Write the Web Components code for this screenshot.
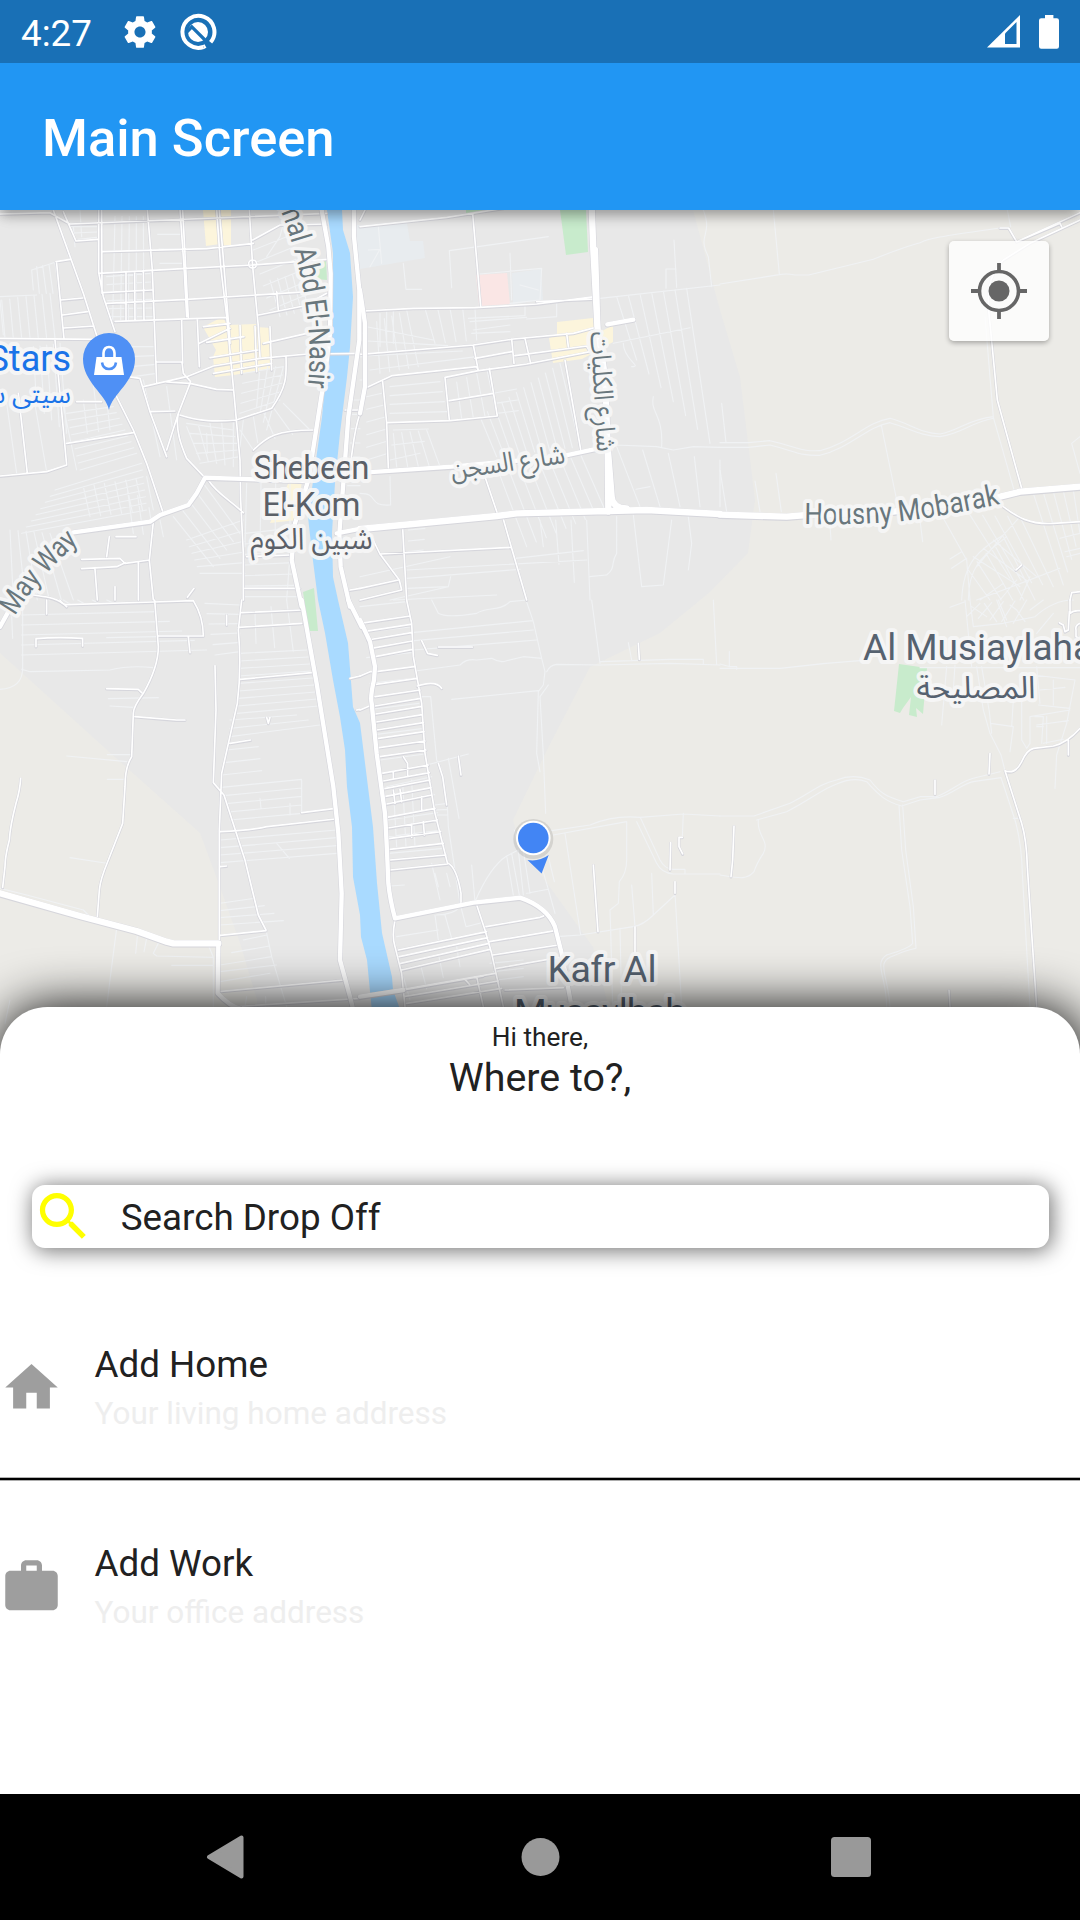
<!DOCTYPE html>
<html lang="en">
<head>
<meta charset="utf-8">
<title>Main Screen</title>
<style>
html,body{margin:0;padding:0;background:#fff}
body{width:1080px;height:1920px;overflow:hidden;font-family:Roboto,"Noto Sans",sans-serif}
</style>
</head>
<body>
<phone-screen>
  <status-bar slot="status" time="4:27"></status-bar>
  <app-bar slot="bar">Main Screen</app-bar>
  <map-view slot="map"></map-view>
  <ride-sheet slot="sheet">
    <span slot="greeting">Hi there,</span>
    <span slot="question">Where to?,</span>
    <search-box slot="search">Search Drop Off</search-box>
    <place-row icon="home"><span slot="title">Add Home</span><span slot="hint">Your living home address</span></place-row>
    <thin-divider></thin-divider>
    <place-row icon="work"><span slot="title">Add Work</span><span slot="hint">Your office address</span></place-row>
  </ride-sheet>
  <nav-bar slot="nav"></nav-bar>
</phone-screen>
<script>
const define = (name, html, setup) => {
  customElements.define(name, class extends HTMLElement {
    connectedCallback() {
      if (this.shadowRoot) return;
      const t = document.createElement('template');
      t.innerHTML = html;
      this.attachShadow({mode: 'open'}).appendChild(t.content.cloneNode(true));
      if (setup) setup(this, this.shadowRoot);
    }
  });
};

define('phone-screen', `
<style>
:host{display:flex;flex-direction:column;position:relative;width:1080px;height:1920px;overflow:hidden;background:#fff}
.body{flex:1;min-height:0;position:relative;overflow:hidden;display:flex;flex-direction:column}
.sheet{position:absolute;left:0;right:0;bottom:0}
.top{position:relative;z-index:1}
</style>
<div class="top"><slot name="status"></slot><slot name="bar"></slot></div>
<div class="body"><slot name="map"></slot><div class="sheet"><slot name="sheet"></slot></div></div>
<slot name="nav"></slot>`);

define('status-bar', `
<style>
:host{display:flex;position:relative;z-index:1;align-items:center;justify-content:space-between;box-sizing:border-box;height:63px;padding:0 21px;background:#1970b6;color:#fff;font-size:36.75px}
div{display:flex;align-items:center}
svg{display:block}
.time{letter-spacing:0;line-height:43px;padding-top:3px}
</style>
<div>
  <span class="time"></span>
  <svg width="38" height="38" viewBox="0 0 24 24" style="margin-left:29px" fill="#fff"><path d="M19.43 12.98c.04-.32.07-.64.07-.98s-.03-.66-.07-.98l2.11-1.65c.19-.15.24-.42.12-.64l-2-3.46c-.12-.22-.39-.3-.61-.22l-2.49 1c-.52-.4-1.08-.73-1.69-.98l-.38-2.65C14.46 2.18 14.25 2 14 2h-4c-.25 0-.46.18-.49.42l-.38 2.65c-.61.25-1.17.59-1.69.98l-2.49-1c-.23-.09-.49 0-.61.22l-2 3.46c-.13.22-.07.49.12.64l2.11 1.65c-.04.32-.07.65-.07.98s.03.66.07.98l-2.11 1.65c-.19.15-.24.42-.12.64l2 3.46c.12.22.39.3.61.22l2.49-1c.52.4 1.08.73 1.69.98l.38 2.65c.03.24.24.42.49.42h4c.25 0 .46-.18.49-.42l.38-2.65c.61-.25 1.17-.59 1.69-.98l2.49 1c.23.09.49 0 .61-.22l2-3.46c.12-.22.07-.49-.12-.64l-2.11-1.65zM12 15.5c-1.93 0-3.5-1.57-3.5-3.5s1.57-3.5 3.5-3.5 3.5 1.57 3.5 3.5-1.57 3.5-3.5 3.5z"/></svg>
  <svg width="38" height="38" viewBox="0 0 38 38" style="margin-left:20px" fill="none"><path d="M31.600 29.200A16 16 0 1 0 24.500 34" stroke="#fff" stroke-width="4"/><path d="M24.500 34A16 16 0 0 0 26.500 33.100" stroke="#fff" stroke-width="4"/><circle cx="19" cy="19" r="10" fill="#fff"/><path d="M8 19 12.800 13.800 29 30" stroke="#1970b6" stroke-width="3.200"/></svg>
</div>
<div>
  <svg width="33" height="33" viewBox="0 0 33 33" style="margin-right:19px" fill="none"><path d="M0 32.5 33 0V32.5Z" fill="#fff"/><path d="M18 18.5 29.5 7V29H18Z" fill="#1970b6"/></svg>
  <svg width="20" height="34" viewBox="0 0 20 34" fill="#fff"><path d="M6 0h8.4v3.2h3.4q2.2 0 2.2 2.2v26q0 2.4-2.2 2.4H2.2Q0 33.800 0 31.400V5.400Q0 3.200 2.200 3.200H6Z"/></svg>
</div>`, (host, root) => {
  root.querySelector('.time').textContent = host.getAttribute('time');
});

define('app-bar', `
<style>
:host{display:flex;align-items:center;box-sizing:border-box;height:147px;padding:2px 42px 0;background:#2196f3;color:#fff;font-size:52.5px;font-weight:500;box-shadow:0 5px 11px rgba(0,0,0,.26),0 9px 14px -3px rgba(0,0,0,.12)}
</style><slot></slot>`);

define('search-box', `
<style>
:host{display:flex;align-items:center;gap:26.25px;height:63px;border-radius:13px;background:#fff;box-shadow:1.84px 1.84px 21px 1.3px rgba(0,0,0,.54);font-size:36.75px}
svg{display:block;flex:none}
span{padding-top:2px}
</style>
<svg width="63" height="63" viewBox="0 0 24 24" fill="#ff0"><path d="M15.500 14h-.79l-.28-.27C15.410 12.590 16 11.110 16 9.500 16 5.910 13.090 3 9.500 3S3 5.910 3 9.500 5.910 16 9.500 16c1.610 0 3.090-.59 4.230-1.570l.27.28v.79l5 4.990L20.490 19l-4.990-5zm-6 0C7.010 14 5 11.990 5 9.500S7.010 5 9.500 5 14 7.010 14 9.500 11.990 14 9.500 14z"/></svg>
<span><slot></slot></span>`);

const rowIcons = {
  home: 'M10 20v-6h4v6h5v-8h3L12 3 2 12h3v8z',
  work: 'M20 6h-4V4c0-1.110-.89-2-2-2h-4c-1.110 0-2 .89-2 2v2H4c-1.110 0-1.990.89-1.990 2L2 19c0 1.110.89 2 2 2h16c1.110 0 2-.89 2-2V8c0-1.110-.89-2-2-2zm-6 0h-4V4h4v2z'
};
define('place-row', `
<style>
:host{display:flex;align-items:center;gap:31.5px;height:91px}
svg{display:block;flex:none}
div{display:flex;flex-direction:column;gap:8.5px}
.t{font-size:36.75px;line-height:43px;color:#212121}
.h{font-size:31.5px;line-height:37px;color:#eee}
</style>
<svg width="63" height="63" viewBox="0 0 24 24" fill="#9e9e9e"><path/></svg>
<div><span class="t"><slot name="title"></slot></span><span class="h"><slot name="hint"></slot></span></div>`,
(host, root) => root.querySelector('path').setAttribute('d', rowIcons[host.getAttribute('icon')]));

define('thin-divider', `
<style>:host{display:block;box-sizing:border-box;height:108px;padding-top:43px}svg{display:block}</style>
<svg width="1080" height="6"><rect y="1.700" width="1080" height="2.625"/></svg>`);

define('ride-sheet', `
<style>
:host{display:flex;flex-direction:column;box-sizing:border-box;height:787.5px;padding-top:15px;background:#fff;border-radius:47.25px 47.25px 0 0;box-shadow:1.84px 1.84px 51px 1.3px #000;color:#212121}
.g{text-align:center;font-size:26.25px;line-height:31px}
.q{text-align:center;font-size:39.375px;line-height:46px;padding-top:2.500px}
.s{padding:83.500px 31.5px 94.500px}
</style>
<div class="g"><slot name="greeting"></slot></div>
<div class="q"><slot name="question"></slot></div>
<div class="s"><slot name="search"></slot></div>
<slot></slot>`);

define('nav-bar', `
<style>
:host{display:flex;justify-content:space-between;align-items:center;box-sizing:border-box;height:126px;padding:0 209px 0 206px;background:#000}
svg{display:block}
</style>
<svg width="40" height="44" viewBox="0 0 40 44"><path d="M35.500 2.500V41.500L3 22Z" fill="#999" stroke="#999" stroke-width="4" stroke-linejoin="round"/></svg>
<svg width="42" height="40"><circle cx="22.500" cy="20" r="19" fill="#999"/></svg>
<svg width="40" height="40"><rect width="40" height="40" rx="3.500" fill="#999"/></svg>`);

/* Road data. Each tile has its own origin and is drawn at a third of its units.
   a: main roads, b: streets, c: lanes. A ladder is [start segment, end segment, count]. */
const tiles = [
{x:0,y:200,
 a2:['M965 30L985 140L992 220L990 400L978 500L950 680L925 840L885 970L875 1080L905 1220','M1062 30L1062 110L1078 270L1078 420L1045 650L1030 850L1018 1000L1022 1100L1050 1220','M220 997L450 965L480 945L565 915L590 880L615 833L920 843','M1010 1000L1085 985'],
 b:['M160 30L250 280L345 580L400 690L440 790L490 940','M190 35L228 123L292 118','M296 30V218L310 290L345 395','M305 30L306 280','M0 42L150 38L210 72L980 40','M442 30L457 210L470 550','M540 30L552 200L560 350','M548 30L565 352','M650 30L662 200L680 350L700 560L720 780L722 900L730 1060L730 1200','M658 30L672 200L684 350L690 430','M748 30L758 200L775 380L780 470','M306 155L620 146L760 130','M296 220L560 205L755 195L980 178','M306 278L455 270','M320 310L560 298L925 275','M345 364L680 352','M385 530L420 535L450 635L500 770','M430 560L560 530L640 498L780 475L920 462L1080 460','M470 486H546L550 520L572 545L535 640L500 750','M545 360L548 490M592 358L598 500','M598 430L690 385','M500 546L570 550L650 568L700 570','M540 645C600 665 650 665 708 660L815 625C860 560 860 530 858 470','M450 635L525 633','M535 640C525 690 545 740 560 775L615 833','M625 840C650 880 690 900 730 938','M200 730L400 698','M0 828L140 815L200 795L165 420','M55 580L82 820','M0 415L305 418','M170 190L192 415M168 185L210 178M182 300L248 294M188 345L262 335M190 384L282 378','M760 750C800 710 830 690 940 690','M230 605H305','M758 120L840 75L980 72','M830 275L835 330M775 345L910 318L980 280','M790 430L920 400','M245 1078L360 1075L375 1090L448 1080M245 1106L350 1100L375 1088M285 1108L292 1200M460 965L448 1080L460 1200M415 1085V1200M348 1010H408M320 1070L328 1010','M345 1160V1200M562 1192L582 1165M740 1070L870 1065M735 1165H900','M100 1185C130 1190 170 1190 200 1220','M1035 630H1080M1080 640C1060 700 1060 740 1050 800M1050 1170L1080 1165','M770 192A12 12 0 1 1 746 192A12 12 0 1 1 770 192'],
 c:['M95 210L100 270M95 210L170 185','M0 290L110 285','M860 30L840 110L800 170','M720 690L760 750M620 700L622 760M870 1065L860 1200'],
 l:[['c',[110,200,118,280],[165,190,180,280],4],['c',[345,50,338,360],[430,50,432,360],5],['c',[0,300,10,405],[140,285,175,405],1],['c',[5,300,15,415],[150,280,165,415],7],['c',[200,130,205,170],[240,30,245,110],3],['c',[210,80,290,80],[235,118,290,112],3],['c',[320,230,450,220],[325,350,460,350],6],['b',[378,218,378,360],[430,210,432,360],3],['c',[470,60,540,60],[480,190,545,190],4],['c',[200,640,340,620],[240,810,410,760],9],['c',[165,870,425,790],[65,1000,440,930],8],['c',[20,610,50,820],[190,620,230,810],3],['c',[100,440,110,620],[180,430,200,700],5],['c',[250,600,262,700],[310,500,330,690],3],['c',[780,500,770,620],[850,500,800,690],4],['c',[560,680,600,780],[700,660,700,800],5],['c',[560,670,700,690],[600,790,720,770],5],['c',[730,520,850,500],[720,640,840,600],5],['c',[730,660,720,740],[850,610,930,690],5],['c',[810,240,840,350],[900,220,925,330],5],['c',[760,150,860,110],[810,330,930,280],6],['c',[380,850,400,1000],[480,960,490,1010],4],['c',[520,950,640,1100],[610,850,720,1000],5],['c',[560,1020,730,960],[600,1120,735,1120],6],['c',[30,990,40,1200],[150,1000,220,1200],6],['c',[250,860,270,950],[440,830,460,930],7],['c',[740,850,735,1040],[870,850,870,1060],4],['c',[735,1000,870,985],[735,1190,890,1190],7],['c',[380,440,460,440],[400,530,470,520],4],['c',[500,560,530,780],[430,540,480,770],2],['c',[1060,600,1080,600],[1040,900,1080,900],8],['b',[610,380,690,370],[640,520,815,490],4],['b',[720,375,725,520],[810,380,815,510],3]]},
{x:360,y:200,
 a:['M695 20L700 150L713 390L735 530L743 740L745 935','M705 150L712 380','M0 987L410 948L470 940L745 933L860 930L1080 942','M743 740L755 890Q757 925 800 925'],
 a2:['M0 270L15 370L15 560L0 640','M20 817L275 800','M275 800L600 770L740 740','M742 373L820 359'],
 b:['M0 80L260 52L430 25','M338 40L362 318','M10 333L160 325L345 323L530 312L705 290','M0 463L340 435L460 417L640 400L715 380','M15 565L95 527L350 500L355 512L255 532L268 660','M68 545L80 668L85 805','M80 668L270 662L412 648L388 505','M345 475L455 455M268 602L400 580M340 435L355 512M455 417L462 490M495 415L512 490','M465 467L680 438L690 455L500 492L355 512','M615 480L662 748','M375 830L412 940M428 950L455 1045L500 1200','M60 1062L455 1042','M25 990L60 1062L118 1140L125 1170L0 1200M128 985L140 1200M0 1165L115 1140M620 400L625 440','M530 305L705 297','M0 60L15 30'],
 c:['M275 263L268 152L565 110','M360 222L545 205L540 300L450 310M450 160L455 300M480 255L535 270','M130 190L138 268H185','M25 150L60 148L30 200M55 80L65 190','M325 355L495 347V318M500 357L590 350V310M340 390L450 375','M720 295L1080 255M942 120L950 262M918 265V207H948','M1030 30C1060 110 1010 100 1045 170L1055 260','M760 430L990 383','M765 735L890 740L940 750L1000 740L1080 742M765 735L740 780','M790 430C790 480 850 500 815 500M880 590C870 640 910 640 905 740','M140 1135L480 1108M140 1110L680 1080M465 1075L670 1052M90 1200L265 1160L272 1130','M740 1125C770 1100 750 1090 770 1060L770 950M820 945L845 1160L910 1155L935 960M985 950L995 1030L985 1110','M0 880C60 880 20 920 92 915L90 830M688 1130L738 1125M828 868L870 860','M0 1130L270 1070M140 1165L265 1160','M100 1200L410 1185'],
 l:[['c',[195,325,225,430],[345,325,350,420],5],['c',[20,380,220,420],[30,510,350,470],4],['c',[50,365,60,520],[140,330,175,500],5],['c',[90,560,240,545],[90,640,260,635],4],['c',[260,560,270,660],[380,505,410,645],5],['c',[360,650,410,770],[600,490,660,740],12],['c',[100,690,205,687],[90,780,180,760],3],['c',[100,700,110,800],[200,690,240,800],5],['c',[410,800,500,1040],[660,760,735,930],9],['c',[540,960,550,1040],[680,960,690,1200],4],['c',[770,290,830,480],[980,265,1050,730],7],['c',[770,740,840,920],[1080,780,1080,920],5],['c',[0,375,18,560],[0,375,18,560],1],['c',[400,580,470,567],[410,640,475,632],3],['c',[0,400,20,400],[0,540,20,540],3],['c',[20,590,65,580],[20,780,85,760],6],['c',[145,990,195,985],[145,1055,190,1050],3],['c',[100,330,100,430],[60,340,60,440],3],['c',[330,365,500,352],[335,400,450,395],2]]},
{x:720,y:200,
 a:['M0 944L200 950L260 945L520 935L840 890L900 875L1080 860'],
 b:['M1080 38L890 125M1080 60L930 130L850 180C800 230 800 290 810 370L832 600L905 865','M840 84H866L890 125L1020 70L1025 80','M850 920C890 950 930 975 1000 970L1080 965','M888 1110L905 1095M1080 1175L1055 1178L1050 1200'],
 c:['M160 30L178 222','M0 252L178 224Q200 220 225 225L266 225L460 178C540 145 560 140 600 128C640 110 700 105 840 84','M862 30L872 80','M795 350L820 652L885 880','M0 728H85L150 722C230 740 240 755 300 752C390 730 440 665 510 655C570 670 600 700 660 702C720 690 740 660 820 650','M0 742H85L150 735C230 755 240 768 300 766C390 745 440 680 510 668C570 685 600 708 660 710C730 700 745 670 820 655','M484 676L530 900','M5 610L18 728M0 810L20 935M105 843L120 935M168 820L184 935M330 975L333 1020M600 960L608 1025M670 955L740 1080L750 1200','M1080 710L1055 730L1080 820','M850 1005C780 1050 730 1080 725 1200M860 1010C800 1060 745 1090 745 1200M690 1077L725 1055M695 1105L740 1075M900 950L850 1005L770 1100','M770 1200L1020 1105M1020 1015L1080 1000M1035 1055L1080 1045M1040 1070L1080 1060'],
 l:[['c',[750,945,870,1135],[900,950,1000,1160],5],['c',[940,880,1030,1155],[1060,870,1080,1000],5],['c',[745,1110,810,1200],[850,1010,945,1200],5],['c',[760,1070,900,1160],[820,1020,950,1130],3],['c',[780,1200,850,1150],[900,1200,930,1130],3]]},
{x:0,y:600,
 a:['M0 880L240 948L410 993L500 1025L520 1030H655'],
 a2:['M0 80L25 35','M905 0L950 250L1000 560L1015 700L1025 880L1020 1080L1050 1190L1060 1230','M655 1030L653 1180Q690 1220 720 1225','M1045 0L1085 80'],
 b:['M180 0Q185 12 200 14L460 6L580 2Q610 50 610 108H475','M140 0V42M464 0L475 140Q475 200 430 280Q400 320 400 340L395 470Q375 500 375 560L368 670L325 780Q300 840 298 870L292 950','M320 266L415 268L425 278M405 350L530 360H555M565 110L570 158','M108 140V116Q170 110 248 115V138','M62 535Q60 570 48 610Q30 680 28 720Q15 770 15 800L8 862','M645 197L648 330L640 548L672 585L735 780L775 945L798 990','M725 0L715 90Q725 200 712 310L665 520L658 690V1030','M725 38L905 30M715 82L905 70M720 238L935 218M690 430L752 420M905 638L1000 626M660 695Q760 690 800 680L1005 657M660 1006L798 992M655 1175L1030 1140M660 800L680 798M800 352L805 370L810 352M680 45V75','M705 1220L1080 1195','M1050 235L1080 228M1070 330L1080 328'],
 c:['M68 20V200Q70 265 0 268M65 208L90 215L330 210Q390 195 460 203','M325 296L475 293M330 318L400 322M200 468L380 485M322 464H395M322 538H370M210 773L320 790M0 865L80 885L250 930L265 945','M350 985L335 1100L320 1220','M412 1010L407 1060M440 1015L432 1055M475 1030L460 1060L470 1068L640 1072M625 1035L640 1072V1220M515 1096H640M798 990L815 1070L860 1220M30 1200L15 1270','M320 113L470 110M35 50L38 115','M830 730L868 775M780 595L783 625M870 610V645M740 1190L735 1220M797 1190V1220'],
 l:[['c',[65,45,470,35],[65,165,620,150],5],['c',[615,10,720,15],[645,165,720,155],6],['c',[720,160,920,150],[712,340,955,318],9],['c',[690,360,890,345],[690,410,960,375],3],['c',[680,450,775,440],[665,525,785,512],3],['c',[665,562,905,538],[690,660,905,640],5],['c',[660,720,1010,690],[660,788,1010,760],4],['c',[660,910,765,895],[660,975,850,962],4],['c',[730,1020,800,1005],[660,1095,815,1070],3],['c',[660,1115,830,1095],[660,1145,810,1120],2],['c',[765,40,768,130],[860,0,880,155],3],['c',[905,540,905,640],[905,540,905,640],1],['c',[190,0,215,15],[320,0,346,12],4]]},
{x:360,y:600,
 a2:['M0 60L30 125L45 200L42 240Q30 290 35 310L50 460L75 640Q80 720 85 850Q90 900 105 955L340 908L480 893Q560 920 585 980L605 1060L635 1220','M0 1190L130 1170'],
 b:['M140 0L155 70L160 170L185 310L195 460L225 640L262 788Q290 800 303 880V910','M130 1170L370 1128','M348 908L375 990L395 1060L430 1220','M105 960Q95 1010 105 1040L125 1120L135 1220','M0 228L30 215H45M0 330L35 315M172 258C210 245 235 250 245 265','M185 122L203 160L232 166','M235 141H337M835 130L838 178M295 468L303 525M130 470L143 490V528M235 490L248 530L260 615','M378 980L540 952Q560 945 560 938M388 1025L585 992M398 1065L595 1035M410 1105L610 1070M435 1170L610 1163','M700 795L714 995M825 980V1060M932 728L930 810M967 712H957V740L968 762M945 845V880','M350 1130L370 1220M315 1138L330 1155M100 515V535M100 570L105 610M120 568L125 605M185 590V630M155 672V712M190 665L193 705','M90 810L262 792'],
 c:['M215 0L235 40C260 55 320 45 350 40C380 20 420 35 450 5L500 0M498 0L520 65L545 175L555 215L550 255L535 275L530 460L540 515','M565 255L540 290L550 465L557 640','M165 213L300 195Q320 175 350 180L395 175Q420 190 440 182L490 170L545 175','M163 122L520 90M163 97L518 62M160 150L530 120','M275 298L535 272M560 215Q570 195 590 193L720 195L930 190L1080 195M722 185L930 178H1030V190M695 0L720 190M805 128L815 180M1060 0L1070 195','M180 290H212L230 480L245 510M200 495L325 462M265 475L297 655','M575 692L690 675Q760 645 840 652L970 642L1080 648M580 705L800 665V780Q800 820 778 845L775 910L750 930L752 990','M830 665L890 790Q905 820 940 822H1080M842 655L900 780Q915 808 940 808H975V820','M615 700L662 1005M565 770L583 845M970 640L967 710M875 820L880 945M815 855L825 980M945 885L880 945Q850 975 820 980L660 1005L590 1010M780 985L785 1220M752 990L758 1220M945 880L965 1220','M345 905Q390 800 440 768L475 750M440 768L460 885M455 760L478 885M475 750L490 885M490 750L510 880M500 880L565 868L545 800M565 868L585 940','M262 615L265 680L300 910L318 980L365 968M215 790L240 900M335 795L345 905M90 858L133 855M225 945L235 1020M255 945L275 1015M230 945Q280 945 300 920M110 1010L235 990M463 690L470 720'],
 l:[['b',[0,70,150,48],[45,170,158,148],5],['b',[48,215,162,200],[45,290,180,270],3],['b',[45,318,182,295],[50,390,190,368],4],['b',[55,415,192,395],[58,470,198,450],3],['b',[65,520,205,495],[80,612,215,585],5],['b',[80,652,225,625],[90,780,258,765],5],['b',[115,1050,380,995],[125,1110,390,1048],4],['b',[130,1168,405,1120],[140,1210,425,1165],3],['c',[0,20,140,5],[60,480,195,462],7],['c',[80,560,215,530],[85,760,250,745],5],['c',[225,820,235,860],[260,820,270,860],2],['c',[225,615,262,610],[230,645,262,645],3],['c',[390,1090,490,1080],[410,1140,490,1130],3],['c',[130,1130,150,1200],[290,1040,300,1100],4],['c',[100,560,110,740],[155,540,165,740],3]]},
{x:720,y:600,
 b:['M1050 0V40Q1060 30 1080 32M1048 35L1045 90L1035 95L1030 75L1018 68M1080 70Q1065 75 1068 90V110L1080 115','M1080 385Q1040 430 1000 438L940 445Q920 450 905 485Q885 525 855 512L905 670Q920 720 922 800L935 1000L950 1220','M810 460L807 522M645 540V583M42 678L38 780L33 830M687 1170L690 1220M1045 420V465'],
 c:['M0 205H180Q300 190 420 182H430M0 192L30 200H50V208M28 155V200M600 203L1080 203','M0 648H102L210 610C270 580 300 550 350 540Q400 520 450 540C480 580 500 590 550 605L600 590H650C700 570 720 545 760 535L840 515','M110 660L200 635C270 600 310 565 350 552Q400 530 440 545C480 590 500 605 545 618L600 600L660 592C700 580 730 550 760 545L843 533','M115 660C110 710 150 720 130 760Q110 790 102 815C80 840 60 835 0 825','M537 615L545 750L570 920L578 1030Q570 1045 500 1065C460 1090 500 1130 500 1220M548 615L557 750L580 920L588 1045Q560 1050 510 1072C470 1090 505 1130 510 1220','M680 200L665 375M705 195L700 270M770 200L790 330L810 400L843 465L855 512M785 200L808 335L815 400','M843 533L885 660Q905 730 907 820L920 1050L930 1220M880 655H895M812 370L880 380L870 455M905 300V420L920 445M930 350V430L920 445','M690 22L735 5M735 0L755 200M750 0L760 80M760 80L850 70L945 50Q1000 0 1060 0M835 0L860 60M945 350H970L965 430M980 350V430M955 315L1050 325M960 270L1035 262M1065 240L1040 370L1010 465L1005 565M940 225L1065 240','M880 300L875 380M950 380H970M970 430L1030 418M870 15L890 30L915 65'],
 l:[['c',[740,50,780,10],[880,70,920,0],5],['c',[755,20,800,50],[830,0,860,80],3],['c',[950,100,1000,40],[930,30,970,0],2],['c',[950,200,960,310],[1000,240,1000,315],2],['c',[930,350,1050,330],[950,375,1045,362],2]]}
];

define('map-view', `
<style>
:host{display:block;position:relative;height:1584px;background:#e8e8e8}
svg.map{display:block}
.btn{position:absolute;top:31px;right:31px;width:100px;height:100px;border-radius:5px;background:rgba(255,255,255,.78);box-shadow:0 2px 5px rgba(0,0,0,.3)}
.lb{paint-order:stroke;stroke:#f7f7f7;stroke-opacity:.92;stroke-width:8px;stroke-linejoin:round}
.ar{font-family:"Noto Sans Arabic","Noto Naskh Arabic","DejaVu Sans",sans-serif}
text{font-family:Roboto,sans-serif}
.rd path{fill:none;stroke-linecap:round;stroke-linejoin:round}
</style>
<svg class="map" width="1080" height="860" viewBox="0 210 1080 860">
  <path fill="#ecebe7" d="M693 210L720 310L740 377L755 500L748 553L710 592L660 633L590 667L547 750L513 820L520 847L547 883L593 947L625 1070H1080V210Z"/>
  <path fill="#ecebe7" d="M0 653L107 750L200 833L220 887L240 943L257 1000V1070H0Z"/>
  <path fill="#fcf5dc" d="M203 210H217L220 244L206 246ZM221 210H231V245L222 246ZM203 327L222 317L228 325L256 324V327L271 328L273 368L234 375L215 377L213 357L216 350ZM557 322L593 318L595 335L613 325V342L595 352L582 359L553 363L549 338L557 335ZM288 484L302 480L297 520L270 523Z"/>
  <path fill="#c8ebcc" d="M560 210H586L588 252L566 255ZM466 210H484L466 213ZM313 262L326 259L327 280L316 279ZM303 592L314 588L318 631L309 631ZM899 664L927 668L923 714L916 708L917 717L909 715L911 697L903 708L900 713L894 711Z"/>
  <path fill="#e8ecef" d="M360 226L407 223L410 241H423L425 258L360 269ZM512 273L541 269L543 300L513 304ZM356 225H360V270H356Z"/>
  <path fill="#fae6e5" d="M476 275L507 273L510 304L479 306Z"/>
  <path fill="#a9daff" d="M327 210L333 253V327L328 353L322 417L315 467L308 517L312 553L318 600L325 633L333 680L340 717L345 750L347 787L352 827L353 877L360 915L361 937L367 960L372 1012H401L393 990L392 977L382 933L377 883L373 827L368 787L360 723L353 707L348 643L338 600L333 577L332 533L335 483L340 433L347 377L350 347L353 297L350 253L343 230L342 210Z"/>
  <g class="rd"></g>
  <g text-anchor="middle" fill="#5b6068" font-size="33">
    <text class="lb" x="311.500" y="479" textLength="116">Shebeen</text>
    <text class="lb" x="311.500" y="516" textLength="98">El-Kom</text>
    <text class="lb ar" x="311.500" y="549" font-size="30" direction="rtl" textLength="122" lengthAdjust="spacingAndGlyphs">شبين الكوم</text>
  </g>
  <g fill="#1a73e8">
    <text class="lb" x="71" y="371" font-size="36" text-anchor="end">Stars</text>
    <text class="lb ar" x="71" y="403" font-size="26" direction="rtl">سيتى ستارز</text>
  </g>
  <path d="M109 410C106 394 83 382 83 359A26 26 0 0 1 135 359C135 382 112 394 109 410Z" fill="#4f90f5"/>
  <path d="M96.500 357H121.500L124 375H94Z" fill="#fff"/>
  <path d="M103.500 357V353Q104 347 109 347T114.500 353V357" fill="none" stroke="#fff" stroke-width="2.600"/>
  <path d="M102 362.500Q103 369 109 369T116 362.500" fill="none" stroke="#4f90f5" stroke-width="2.600"/>
  <defs>
    <path id="nasir" d="M278 204C290 232 301 272 305 300C310 335 311 360 307 394"/>
    <path id="may" d="M15 616C30 591 47 570 84 537"/>
    <path id="housny" d="M804 524Q855 525 893 522T1010 502"/>
  </defs>
  <g fill="#69777d" font-size="29.500">
    <text class="lb"><textPath href="#nasir" textLength="188" lengthAdjust="spacingAndGlyphs">mal Abd El-Nasir</textPath></text>
    <text class="lb"><textPath href="#may" textLength="98" lengthAdjust="spacingAndGlyphs">May Way</textPath></text>
    <text class="lb"><textPath href="#housny" textLength="198" lengthAdjust="spacingAndGlyphs">Housny Mobarak</textPath></text>
    <text class="lb ar" direction="rtl" text-anchor="middle" font-size="27" transform="translate(509 471) rotate(-8)" textLength="115" lengthAdjust="spacingAndGlyphs">شارع السجن</text>
    <text class="lb ar" direction="rtl" text-anchor="middle" font-size="27" transform="translate(594 392) rotate(87)" textLength="120" lengthAdjust="spacingAndGlyphs">شارع الكليات</text>
  </g>
  <g fill="#566270" font-size="37.500">
    <text class="lb" x="863" y="660" font-size="37">Al Musiaylaha</text>
    <text class="lb ar" x="976" y="698" font-size="31" text-anchor="middle" direction="rtl" textLength="119" lengthAdjust="spacingAndGlyphs">المصليحة</text>
    <text class="lb" x="602" y="982" text-anchor="middle" textLength="109">Kafr Al</text>
    <text class="lb" x="600" y="1025" text-anchor="middle" textLength="172">Musaylhah</text>
  </g>
  <circle cx="533.300" cy="839" r="20" fill="#000" opacity=".1"/>
  <circle cx="533.300" cy="838" r="17.300" fill="#fff"/>
  <circle cx="533.300" cy="838" r="15.300" fill="#4285f4"/>
  <path d="M527.500 860Q539 862 548.700 855L541.600 873.500Z" fill="#4285f4"/>
</svg>
<div class="btn"><svg width="100" height="100" viewBox="-50 -50 100 100"><circle r="19.500" fill="none" stroke="#666" stroke-width="3.600"/><circle r="10.500" fill="#666"/><path d="M0-28V-20M0 20V28M-28 0H-20M20 0H28" stroke="#666" stroke-width="3.800"/></svg></div>`,
(host, root) => {
  const g = root.querySelector('.rd');
  const rung = ([p, q, n]) => {
    let d = '';
    for (let i = 0; i < n; i++) {
      const k = n > 1 ? i / (n - 1) : 0;
      const m = p.map((v, j) => Math.round(v + (q[j] - v) * k));
      d += `M${m[0]} ${m[1]}L${m[2]} ${m[3]}`;
    }
    return d;
  };
  const width = {a: 19, a2: 13, b: 5, c: 3.3};
  const layers = {c: '', b: '', a2: '', a: ''};
  const casing = {b: '', a2: '', a: ''};
  for (const t of tiles) {
    const tf = `translate(${t.x} ${t.y}) scale(.33333)`;
    for (const k of ['c', 'b', 'a2', 'a']) {
      let d = (t[k] || []).join('');
      for (const [cls, p, q, n] of t.l || []) if (cls === k) d += rung([p, q, n]);
      if (!d) continue;
      if (k !== 'c') casing[k] += `<path d="${d}" transform="${tf} translate(0 1.500)" stroke="#d6d6dc" stroke-width="${width[k] + 3.5}"/>`;
      layers[k] += `<path d="${d}" transform="${tf}" stroke="${k === 'c' ? '#f0f2f4' : '#fff'}" stroke-width="${width[k]}"/>`;
    }
  }
  g.innerHTML = layers.c + casing.b + layers.b + casing.a2 + casing.a + layers.a2 + layers.a;
});
</script>
</body>
</html>
